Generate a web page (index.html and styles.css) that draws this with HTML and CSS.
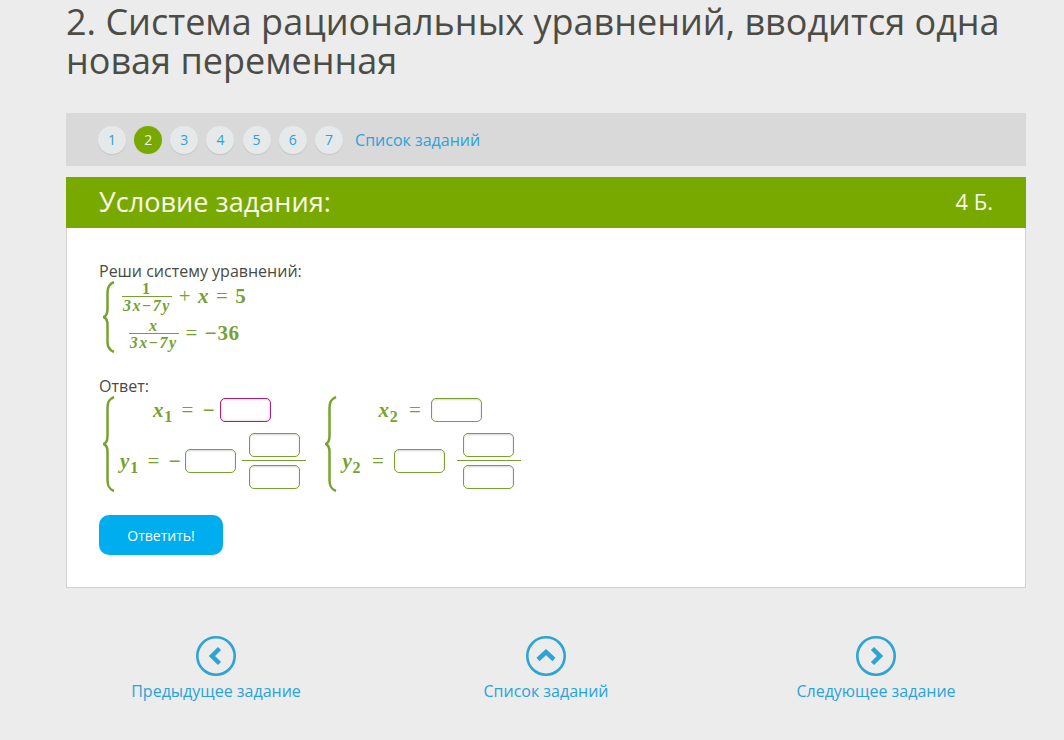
FILE: index.html
```html
<!DOCTYPE html>
<html lang="ru">
<head>
<meta charset="utf-8">
<title>Система рациональных уравнений</title>
<link rel="stylesheet" href="styles.css">
</head>
<body>
<main class="page">
  <h1 class="title">2. Система рациональных уравнений, вводится одна новая переменная</h1>
  <nav class="tabs">
    <a class="tab">1</a><a class="tab tab-active">2</a><a class="tab">3</a><a class="tab">4</a><a class="tab">5</a><a class="tab">6</a><a class="tab">7</a>
    <a class="tabs-link">Список заданий</a>
  </nav>
  <section class="card">
    <header class="card-head">
      <span class="card-title">Условие задания:</span>
      <span class="card-score">4 Б.</span>
    </header>
    <div class="card-body">
      <p class="label">Реши систему уравнений:</p>
      <div class="systems">
        <div class="system task-system">
          <svg class="brace brace-small" viewBox="0 0 12 72" preserveAspectRatio="none"><path d="M11 1C6 3 4.500 6 4.500 11V28C4.500 32 3 35 .8 36 3 37 4.500 40 4.500 44V61C4.500 66 6 69 11 71" fill="none" stroke="#78a22f" stroke-width="2.500"/></svg>
          <div class="rows rows-task">
            <div class="row"><span class="frac frac-text"><span class="num">1</span><span class="den"><i>3x</i>−<i>7y</i></span></span><span class="expr"><b>+</b> <i>x</i> <b>=</b> 5</span></div>
            <div class="row"><span class="frac frac-text"><span class="num"><i>x</i></span><span class="den"><i>3x</i>−<i>7y</i></span></span><span class="expr"><b>=</b> −36</span></div>
          </div>
        </div>
      </div>
      <p class="label label-answer">Ответ:</p>
      <div class="systems">
        <div class="system">
          <svg class="brace brace-large" viewBox="0 0 12 96" preserveAspectRatio="none"><path d="M11 1C6 3 4.500 6 4.500 12V40C4.500 44 3 47 .8 48 3 49 4.500 52 4.500 56V84C4.500 90 6 93 11 95" fill="none" stroke="#78a22f" stroke-width="2.500"/></svg>
          <div class="rows rows-answer">
            <div class="row row-gap"><span class="expr"><i>x</i><sub>1</sub> <b>=</b> −</span><span class="field field-active"></span></div>
            <div class="row row-gap"><span class="expr"><i>y</i><sub>1</sub> <b>=</b> −</span><span class="field"></span><span class="frac frac-input"><span class="num"><span class="field"></span></span><span class="den"><span class="field"></span></span></span></div>
          </div>
        </div>
        <div class="system">
          <svg class="brace brace-large" viewBox="0 0 12 96" preserveAspectRatio="none"><path d="M11 1C6 3 4.500 6 4.500 12V40C4.500 44 3 47 .8 48 3 49 4.500 52 4.500 56V84C4.500 90 6 93 11 95" fill="none" stroke="#78a22f" stroke-width="2.500"/></svg>
          <div class="rows rows-answer">
            <div class="row row-gap-wide"><span class="expr"><i>x</i><sub>2</sub> <b>=</b></span><span class="field"></span></div>
            <div class="row row-gap-wide"><span class="expr"><i>y</i><sub>2</sub> <b>=</b></span><span class="field"></span><span class="frac frac-input"><span class="num"><span class="field"></span></span><span class="den"><span class="field"></span></span></span></div>
          </div>
        </div>
      </div>
      <button class="submit" type="button">Ответить!</button>
    </div>
  </section>
  <footer class="pager">
    <a class="pager-item">
      <svg class="pager-icon" viewBox="0 0 40 40"><circle cx="20" cy="20" r="18.700" fill="none" stroke="#2ea3d5" stroke-width="2.600"/><path d="M23.500 12.500 16 20 23.500 27.500" fill="none" stroke="#2ea3d5" stroke-width="4.500"/></svg>
      <span>Предыдущее задание</span>
    </a>
    <a class="pager-item">
      <svg class="pager-icon" viewBox="0 0 40 40"><circle cx="20" cy="20" r="18.700" fill="none" stroke="#2ea3d5" stroke-width="2.600"/><path d="M12 23.500 20 16 28 23.500" fill="none" stroke="#2ea3d5" stroke-width="4.500"/></svg>
      <span>Список заданий</span>
    </a>
    <a class="pager-item">
      <svg class="pager-icon" viewBox="0 0 40 40"><circle cx="20" cy="20" r="18.700" fill="none" stroke="#2ea3d5" stroke-width="2.600"/><path d="M16.500 12.500 24 20 16.500 27.500" fill="none" stroke="#2ea3d5" stroke-width="4.500"/></svg>
      <span>Следующее задание</span>
    </a>
  </footer>
</main>
</body>
</html>
```
FILE: styles.css
```css
* { box-sizing: border-box; }
html, body { margin: 0; height: 740px; overflow: hidden; }
body { background: #ececec; font-family: "Open Sans", "Noto Sans", sans-serif; color: #4a4a45; }
.page { width: 960px; margin-left: 66px; }
.title { margin: 0; padding-top: 2px; font-size: 36px; line-height: 39px; font-weight: 400; color: #4c4c46; height: 113px; }
.tabs { height: 53px; background: #d9d9d9; display: flex; align-items: center; padding-left: 32px; gap: 8.170px; font-size: 16px; }
.tab { width: 28px; height: 28px; border-radius: 50%; background: #e6e9ea; box-shadow: 0 1px 1px #c4c4c4; color: #2f9fd6; font-size: 14px; line-height: 28px; text-align: center; }
.tab-active { background: #78a900; color: #f4f8e6; box-shadow: none; }
.tabs-link { margin-left: 4px; color: #29a3dc; }
.card { margin-top: 11px; border: 1px solid #d2d2d2; border-top: 0; background: #fff; height: 411px; }
.card-head { margin: 0 -1px; height: 51px; background: #78a900; color: #f8fbe9; display: flex; justify-content: space-between; align-items: center; padding: 0 33px 3px; }
.card-title { font-size: 27.100px; }
.card-score { font-size: 22px; }
.card-body { padding: 33px 32px 0; }
.label { margin: 0; font-size: 16px; line-height: 20px; }
.label-answer { margin-top: 23px; }
.systems { display: flex; gap: 15px; font-family: "Liberation Serif", serif; color: #76a132; font-size: 21px; font-weight: 700; }
.system { display: flex; align-items: center; }
.brace { display: block; flex: none; margin-left: 4px; width: 12px; }
.brace-small { height: 72px; }
.brace-large { height: 96px; }
.rows { display: flex; flex-direction: column; align-items: center; margin-left: 5px; }
.rows-task { gap: 4px; margin-left: 7px; }
.rows-task .expr { padding-bottom: 4px; word-spacing: 1px; letter-spacing: .6px; }
.rows-answer { gap: 11px; padding-bottom: 1px; }
.rows-answer .expr { line-height: 24px; }
.rows-answer .row:first-child { margin-right: 3px; }
.row { display: flex; align-items: center; white-space: pre; }
.row-gap { gap: 4px; }
.row-gap-wide { gap: 9px; }
.row-gap-wide .expr { word-spacing: 4.500px; }
.frac { display: inline-flex; flex-direction: column; align-items: center; }
.frac-text { font-size: 16px; margin-right: 7px; letter-spacing: 1.500px; }
.frac-text .num { border-bottom: 1px solid #76a132; width: 100%; text-align: center; line-height: 14px; }
.frac-text .den { padding: 0 1px 1px; line-height: 17px; }
.frac-input { margin-left: 2px; width: 64px; }
.row-gap-wide .frac-input { margin-left: 3px; }
.frac-input .num { width: 100%; display: flex; justify-content: center; padding-bottom: 3px; border-bottom: 1px solid #76a132; }
.frac-input .den { padding-top: 4px; }
.expr { word-spacing: 2.500px; letter-spacing: .8px; }
.expr b { font-weight: 400; }
.expr sub { font-size: 16px; line-height: 0; }
.field { display: block; width: 51px; height: 24px; border: 1px solid #78a22f; border-radius: 5px; background: #fff; box-shadow: inset 0 1px 2px #d5d5d5; }
.field-active { border-color: #a81f78; box-shadow: inset 0 0 3px #e9b5d5; }
.submit { display: block; margin-top: 23px; width: 124px; height: 40px; border: 0; border-radius: 10px; background: #00aeef; color: #fff; font: 14px "Open Sans", sans-serif; }
.pager { display: flex; margin: 48px 0 0 -15px; }
.pager-item { flex: none; width: 330px; display: flex; flex-direction: column; align-items: center; color: #29a3dc; font-size: 16px; line-height: 22px; }
.pager-icon { width: 40px; height: 40px; margin-bottom: 4px; }
```
